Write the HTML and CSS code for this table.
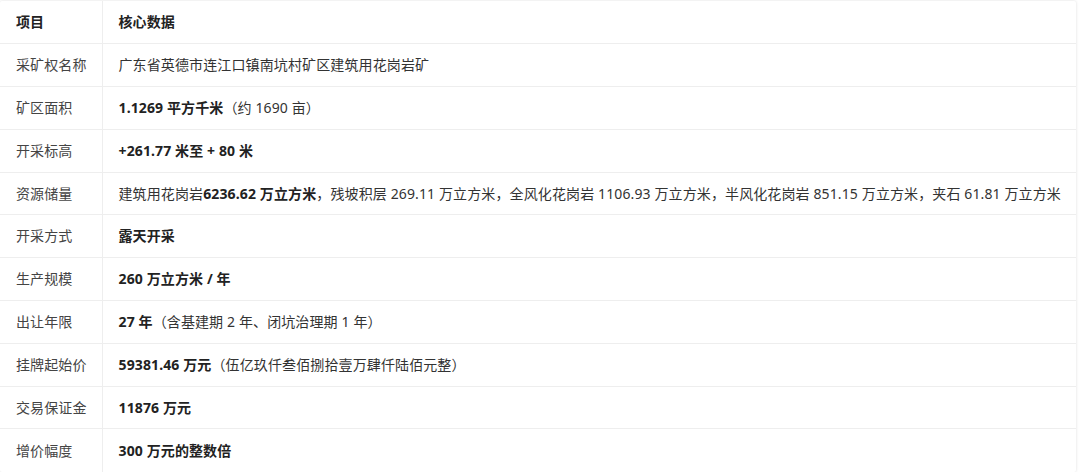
FILE: index.html
```html
<!DOCTYPE html>
<html lang="zh-CN">
<head>
<meta charset="utf-8">
<link rel="stylesheet" href="styles.css">
</head>
<body>
<div class="wrap">
<table class="data">
  <thead>
    <tr><th class="key">项目</th><th class="val">核心数据</th></tr>
  </thead>
  <tbody>
    <tr><td class="key">采矿权名称</td><td class="val">广东省英德市连江口镇南坑村矿区建筑用花岗岩矿</td></tr>
    <tr><td class="key">矿区面积</td><td class="val"><b>1.1269 平方千米</b>（约 1690 亩）</td></tr>
    <tr><td class="key">开采标高</td><td class="val"><b>+261.77 米至 + 80 米</b></td></tr>
    <tr><td class="key">资源储量</td><td class="val">建筑用花岗岩<b>6236.62 万立方米</b>，残坡积层 269.11 万立方米，全风化花岗岩 1106.93 万立方米，半风化花岗岩 851.15 万立方米，夹石 61.81 万立方米</td></tr>
    <tr><td class="key">开采方式</td><td class="val"><b>露天开采</b></td></tr>
    <tr><td class="key">生产规模</td><td class="val"><b>260 万立方米 / 年</b></td></tr>
    <tr><td class="key">出让年限</td><td class="val"><b>27 年</b>（含基建期 2 年、闭坑治理期 1 年）</td></tr>
    <tr><td class="key">挂牌起始价</td><td class="val"><b>59381.46 万元</b>（伍亿玖仟叁佰捌拾壹万肆仟陆佰元整）</td></tr>
    <tr><td class="key">交易保证金</td><td class="val"><b>11876 万元</b></td></tr>
    <tr><td class="key">增价幅度</td><td class="val"><b>300 万元的整数倍</b></td></tr>
  </tbody>
</table>
</div>
</body>
</html>
```

FILE: styles.css
```css
html, body {
  margin: 0;
  padding: 0;
  background: #fff;
}
body {
  font-family: "Noto Sans", "Noto Sans CJK SC", sans-serif;
  font-size: 14px;
  color: #333;
}
.wrap {
  padding-top: 1px;
  width: 1076px;
}
.data {
  width: 1076px;
  border-collapse: collapse;
  box-shadow: 0 0 3px rgba(0, 0, 0, 0.14);
  border-radius: 2px;
  table-layout: fixed;
}
.data th, .data td {
  height: 42.8px;
  padding: 0 0 0 16px;
  text-align: left;
  vertical-align: middle;
  white-space: nowrap;
  border-bottom: 1px solid #eee;
  line-height: 20px;
  letter-spacing: 0.12px;
  box-sizing: border-box;
}
.data tr:last-child td {
  border-bottom: none;
}
.data th {
  font-weight: bold;
  color: #222;
}
.data .key {
  width: 102px;
  border-right: 1px solid #eee;
  color: #444;
}
.data th.key {
  color: #222;
}
.data .val b {
  font-weight: bold;
  color: #222;
}
```
